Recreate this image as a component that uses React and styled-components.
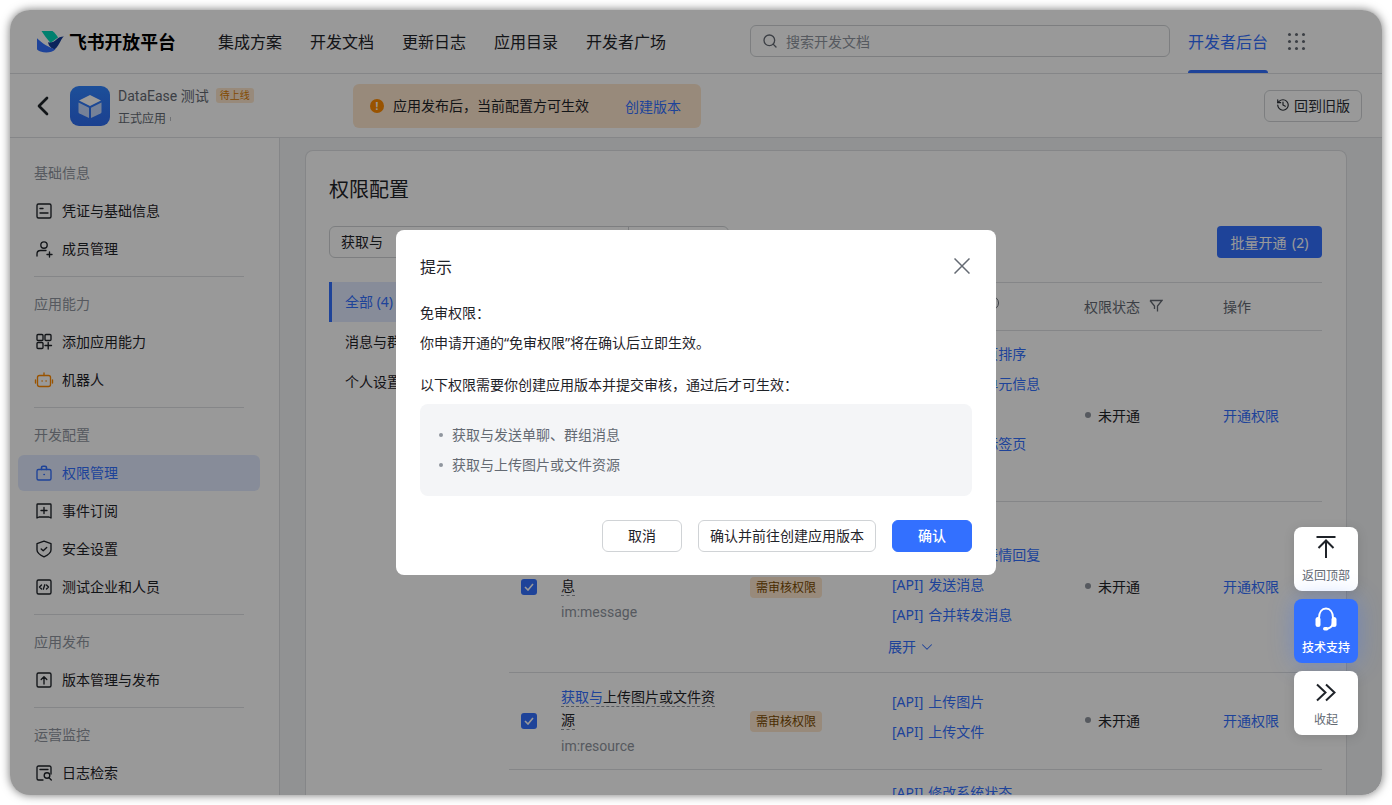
import React from "react";
import styled, { createGlobalStyle } from "styled-components";
import { ChevronLeft, ChevronDown, Search, History } from "lucide-react";

const Global = createGlobalStyle`
  html, body { margin: 0; padding: 0; background: #fff; }
  body { font-family: "Noto Sans", "Noto Sans CJK SC", sans-serif; font-size: 14px; color: #1f2329; }
  * { box-sizing: border-box; }
`;

const Page = styled.div`
  width: 1392px; height: 805px; padding: 10px; overflow: hidden; background: #fff;
`;
const Win = styled.div`
  position: relative; width: 1372px; height: 785px; border-radius: 20px; overflow: hidden;
  background: #fff; display: flex; flex-direction: column;
  box-shadow: 0 0 10px rgba(0,0,0,.55);
`;
const Overlay = styled.div`
  position: absolute; inset: 0; background: rgba(0,0,0,.4); z-index: 5;
`;

/* top bar */
const Top = styled.header`
  height: 64px; flex: none; display: flex; align-items: center; padding: 0 0 0 27px;
  border-bottom: 1px solid #dee0e3;
`;
const LogoBox = styled.div`display: flex; align-items: center; gap: 5px; width: 181px;`;
const LogoText = styled.span`font-size: 17.8px; font-weight: 700; color: #000; line-height: 24px;`;
const TopNav = styled.nav`display: flex; gap: 28px; width: 532px;`;
const TopLink = styled.a`font-size: 16px; line-height: 24px; color: #1f2329;`;
const SearchBox = styled.div`
  width: 420px; height: 32px; border: 1px solid #d0d3d6; border-radius: 6px; display: flex; align-items: center;
  padding-left: 11px; gap: 8px; font-size: 14px; color: #8f959e; margin-top: -2px;
`;
const DevTab = styled.a`
  position: relative; margin-left: 18px; font-size: 16px; line-height: 64px; height: 63px; color: #3370ff;
  &::after { content: ""; position: absolute; left: 0; right: 0; bottom: 0; height: 3px; background: #3370ff; border-radius: 3px 3px 0 0; }
`;
const Dots = styled.div`
  margin-left: 20px; display: grid; grid-template-columns: repeat(3, 3.4px); gap: 3.6px;
  i { width: 3.4px; height: 3.4px; border-radius: 50%; background: #646a73; display: block; }
`;

/* sub bar */
const Sub = styled.div`
  height: 64px; flex: none; display: flex; align-items: center; padding-left: 22px; border-bottom: 1px solid #dee0e3;
`;
const Back = styled.div`
  width: 38px; display: flex; color: #1f2329;
  svg { flex: none; margin-left: -5px; }
`;
const AppIcon = styled.div`
  width: 40px; height: 40px; border-radius: 9px; background: linear-gradient(180deg,#2f83ff,#2e6cf0);
  display: flex; align-items: center; justify-content: center; margin-right: 8px;
`;
const AppInfo = styled.div`width: 235px; display: flex; flex-direction: column; gap: 3px;`;
const AppNameRow = styled.div`display: flex; align-items: center; gap: 7px; line-height: 22px; color: #646a73; padding-top: 1px;`;
const AppName = styled.span`font-family: Roboto, "Noto Sans CJK SC", sans-serif;`;
const WaitTag = styled.span`
  font-size: 10px; line-height: 15px; padding: 0 4px; border-radius: 3px; background: #fee7cd; color: #d97a00;
`;
const AppSub = styled.div`
  font-size: 12px; line-height: 18px; color: #646a73; display: flex; align-items: center; gap: 4px;
  &::after { content: ""; width: 1px; height: 4px; background: #bbbfc4; }
`;
const Alert = styled.div`
  width: 348px; height: 44px; border-radius: 6px; background: #fee7cd; display: flex; align-items: center; padding-left: 17px;
`;
const AlertDot = styled.span`
  width: 14px; height: 14px; border-radius: 50%; background: #ff8a00; color: #fff; font-size: 10px; font-weight: 700;
  line-height: 14px; text-align: center; margin-right: 9px;
`;
const AlertText = styled.span`line-height: 22px; color: #1f2329;`;
const AlertLink = styled.a`margin-left: 36px; color: #3370ff;`;
const OldBtn = styled.button`
  margin-left: 563px; width: 98px; height: 32px; border: 1px solid #d0d3d6; border-radius: 6px; background: #fff;
  font: inherit; display: flex; align-items: center; justify-content: center; gap: 4px; padding: 0 0 1px; color: #2b2f36;
`;

/* body */
const Body = styled.div`flex: 1; min-height: 0; display: flex;`;
const Side = styled.aside`
  width: 270px; flex: none; border-right: 1px solid #dee0e3; padding-top: 24px; overflow: hidden;
`;
const SideLabel = styled.div`
  font-size: 14px; line-height: 22px; color: #8f959e; margin: 0 0 9px 24px;
`;
const SideItem = styled.a`
  display: flex; align-items: center; gap: 8px; height: 36px; margin: 0 19px 2px 8px; padding: 0 0 2px 16px;
  border-radius: 6px; color: ${p => (p.$active ? "#3370ff" : "#1f2329")};
  background: ${p => (p.$active ? "rgba(51,112,255,.15)" : "transparent")};
`;
const SideIcon = styled.svg`
  width: 20px; height: 20px; flex: none; margin-top: 2px; fill: none; stroke: ${p => p.$c || "currentColor"}; stroke-width: 1.35;
  stroke-linejoin: round; stroke-linecap: round;
`;
const SideRule = styled.div`height: 1px; background: #dee0e3; margin: 9px 35px 16px 24px;`;

const Main = styled.main`
  flex: 1; min-width: 0; overflow: hidden; background: #f2f3f5; padding: 12px 35px 0 25px;
`;
const Card = styled.section`
  background: #fff; border: 1px solid #dee0e3; border-bottom: 0; border-radius: 8px 8px 0 0; padding: 24px 24px 0 23px; height: 800px;
`;
const CardTitle = styled.h2`margin: 1px 0 22px; font-size: 20px; font-weight: 400; line-height: 28px; color: #1f2329;`;
const FilterRow = styled.div`display: flex; justify-content: space-between; height: 32px; margin-bottom: 24px;`;
const FilterBox = styled.div`
  width: 400px; border: 1px solid #d0d3d6; border-radius: 6px; display: flex; line-height: 30px;
`;
const FilterInput = styled.div`
  width: 299px; padding-left: 11px; border-right: 1px solid #d0d3d6; color: #1f2329;
`;
const PrimaryBtn = styled.button`
  width: 105px; height: 32px; border: 0; border-radius: 4px; background: #3370ff; color: #fff; font: inherit; padding: 0; word-spacing: 2px;
`;
const Columns = styled.div`display: flex;`;
const CatList = styled.div`width: 180px; flex: none;`;
const CatItem = styled.div`
  height: 40px; line-height: 40px; padding-left: ${p => (p.$active ? "13px" : "16px")};
  border-left: ${p => (p.$active ? "3px solid #3370ff" : "0")};
  background: ${p => (p.$active ? "rgba(51,112,255,.15)" : "transparent")};
  color: ${p => (p.$active ? "#3370ff" : "#1f2329")};
`;
const Table = styled.div`width: 813px; flex: none;`;
const grid = `display: grid; grid-template-columns: 52px 189px 142px 192px 139px 99px;`;
const HeadRow = styled.div`
  ${grid} height: 49px; align-items: center; padding-bottom: 2px; border-top: 1px solid #dee0e3; border-bottom: 1px solid #dee0e3; color: #646a73;
`;
const HeadCell = styled.div`display: flex; align-items: center; gap: 9px;`;
const HelpDot = styled.span`
  width: 14px; height: 14px; margin-left: auto; margin-right: 85px; margin-top: -6px; border: 1px solid #646a73; border-radius: 50%; flex: none;
`;
const Row = styled.div`${grid} align-items: center; padding: 8px 0; border-bottom: 1px solid #dee0e3;`;
const CheckCell = styled.div`padding-left: 12px; display: flex;`;
const Check = styled.span`
  width: 16px; height: 16px; border-radius: 3px; background: #3370ff; display: flex; align-items: center; justify-content: center;
`;
const NameCell = styled.div`width: 158px; padding: 4px 0 3px;`;
const NameLine = styled.div`line-height: 23px;`;
const NameText = styled.span`border-bottom: 1px dashed #8f959e; color: #1f2329;`;
const Hit = styled.span`color: #3370ff;`;
const ScopeId = styled.div`font-family: Roboto, sans-serif; line-height: 24px; margin-top: 3px; color: #8f959e;`;
const ReviewTag = styled.span`
  display: inline-block; width: 72px; height: 21px; border-radius: 4px; background: #fee7cd; color: #7a4a00;
  font-size: 12px; line-height: 21px; text-align: center;
`;
const ApiList = styled.div`padding-bottom: ${p => (p.$open ? "2px" : "8px")};`;
const ApiLink = styled.div`line-height: 30px; color: #3370ff; word-spacing: 1.2px;`;
const Expand = styled.div`
  margin: 2px 0 0 -4px; line-height: 30px; color: #3370ff; display: flex; align-items: center; gap: 2px;
`;
const Status = styled.div`display: flex; align-items: center; gap: 7px; color: #1f2329; margin-top: -2px;`;
const Dot = styled.i`width: 6px; height: 6px; border-radius: 50%; background: #8f959e; margin-left: 1px; margin-top: -1px;`;
const OpLink = styled.a`color: #3370ff; margin-top: -2px;`;

/* floating */
const FloatCol = styled.div`
  position: absolute; right: 24px; top: 517px; z-index: 8; display: flex; flex-direction: column; gap: 8px;
`;
const FloatBtn = styled.div`
  width: 64px; height: 64px; border-radius: 8px; background: ${p => (p.$primary ? "#3370ff" : "#fff")};
  color: ${p => (p.$primary ? "#fff" : "#1f2329")}; display: flex; flex-direction: column; align-items: center;
  padding-top: 8px; box-shadow: ${p => (p.$primary ? "0 0 24px rgba(51,112,255,.35)" : "0 2px 12px rgba(0,0,0,.12)")};
`;
const FloatIcon = styled.svg`
  width: 24px; height: 24px; flex: none; fill: none; stroke: currentColor; stroke-width: 2;
`;
const FloatLabel = styled.span`font-size: 12px; line-height: 18px; margin-top: 8px; color: ${p => (p.$primary ? "#fff" : "#646a73")}; font-weight: ${p => (p.$primary ? 500 : 400)};`;

/* modal */
const ModalWrap = styled.div`
  position: fixed; inset: 0; z-index: 10; display: flex; align-items: center; justify-content: center;
`;
const Modal = styled.div`
  width: 600px; height: 345px; background: #fff; border-radius: 8px; padding: 24px; display: flex; flex-direction: column;
`;
const ModalHead = styled.div`display: flex; align-items: center; justify-content: space-between; height: 24px; margin-bottom: 24px;`;
const ModalTitle = styled.div`font-size: 16px; line-height: 24px; color: #1f2329; padding-top: 2px;`;
const CloseBtn = styled.svg`
  width: 16px; height: 16px; margin-right: 2px; fill: none; stroke: #646a73; stroke-width: 1.5;
`;
const Para = styled.p`margin: 0 0 8px; line-height: 22px; color: #1f2329;`;
const ParaGap = styled(Para)`margin: 12px 0 8px;`;
const ListBox = styled.ul`
  list-style: none; margin: 0; padding: 16px 19px; background: #f4f5f7; border-radius: 8px; height: 92px; flex: none;
`;
const ListItem = styled.li`
  line-height: 30px; color: #646a73; display: flex; align-items: center; gap: 9px;
  &::before { content: ""; width: 4px; height: 4px; border-radius: 50%; background: #8f959e; margin-top: -1px; }
`;
const ModalFoot = styled.div`display: flex; justify-content: flex-end; gap: 16px; margin-top: 24px;`;
const Btn = styled.button`
  height: 32px; min-width: 80px; padding: 0 11px; border-radius: 6px; font: inherit; line-height: 30px;
  border: 1px solid ${p => (p.$primary ? "#3370ff" : "#d0d3d6")};
  background: ${p => (p.$primary ? "#3370ff" : "#fff")};
  color: ${p => (p.$primary ? "#fff" : "#1f2329")};
  font-weight: ${p => (p.$primary ? 500 : 400)};
`;

const Logo = () => (
  <svg width="27" height="23" viewBox="0 0 27 23">
    <path d="M4.5 1h11c2.5 2 4.2 4.2 5.5 6.5L13.5 13C10 9 7 5 4.5 1z" fill="#00d6b9" />
    <path d="M11 12.2c3 .9 6-.2 8.5-2.6 2-1.900 4-3 7.500-3.100-1.500 1-2.400 2.600-3.500 4.700-1.300 2.500-3.200 6.300-6 8.300-3-1-6-3.700-6.500-7.300z" fill="#133c9a" />
    <path d="M0 8.200c5 5 11.500 9.300 18.500 11C15 22.500 9 23.500 3.500 21.500 1.500 20.700 0 20 0 19z" fill="#3370ff" />
  </svg>
);
const Cube = () => (
  <svg width="28" height="28" viewBox="0 0 28 28">
    <path d="M14 3l11 5.500L14 14 3 8.500z" fill="#fff" />
    <path d="M2.500 10.500l10.500 5.300V26L3.500 21.500c-.6-.3-1-.9-1-1.600z" fill="#fff" opacity=".72" />
    <path d="M25.500 10.500L15 15.800V26l9.500-4.500c.6-.3 1-.9 1-1.600z" fill="#fff" opacity=".72" />
  </svg>
);
const Chk = () => (
  <svg width="10" height="8" viewBox="0 0 10 8"><path d="M1 4l3 3 5-6" fill="none" stroke="#fff" strokeWidth="1.6" /></svg>
);

const icons = {
  card: <><rect x="3" y="3" width="14" height="14" rx="1.5" /><path d="M6 7.500h3M6 12h8" /></>,
  user: <><circle cx="10" cy="6" r="3.200" /><path d="M3 17v-2c0-2 1.500-3.500 3.500-3.500H12M13 15.500h5M15.500 13v5" /></>,
  apps: <><rect x="3" y="2.500" width="6" height="6" rx="1" /><rect x="11" y="2.500" width="6" height="6" rx="1" /><rect x="3" y="10.500" width="6" height="6" rx="1" /><path d="M11 13.500h6.500M14.200 10.500v6.500" /></>,
  bot: <><rect x="3.500" y="5.500" width="13" height="11" rx="2" /><path d="M10 3v2.500M1.500 10v3M18.500 10v3M8 11h.2M12 11h.2" /></>,
  lock: <><rect x="3" y="6.500" width="14" height="10.500" rx="1.500" /><path d="M7.500 6.500V4.800c0-.9.600-1.500 1.500-1.500h2c.9 0 1.500.6 1.500 1.500v1.700M10 11.500h.3" strokeWidth="1.6" /></>,
  event: <><path d="M3 3.800c0-.5.400-.8.800-.8h12.400c.4 0 .8.300.8.800V17l-2-1H5l-2 1z" /><path d="M7 9.500h6M10 6.500v6" /></>,
  shield: <><path d="M10 2.200l7 2.500v6.300c0 3-3.500 5.200-7 6.800-3.500-1.600-7-3.800-7-6.800V4.700z" /><path d="M7.200 10l2 1.800 3.500-3.300" /></>,
  code: <><rect x="3" y="3" width="14" height="14" rx="1.500" /><path d="M7.500 8L5.500 10l2 2M12.500 8l2 2-2 2M10.800 7.800l-1.500 4.400" /></>,
  up: <><rect x="3" y="3" width="14" height="14" rx="1.500" /><path d="M10 14V7M7.200 9.500L10 6.800l2.800 2.700" /></>,
  log: <><path d="M17 11V4.500c0-.8-.7-1.500-1.500-1.500h-11C3.700 3 3 3.700 3 4.500v11c0 .8.700 1.500 1.500 1.500H9M6 6.500h8" /><circle cx="13" cy="12.500" r="2.800" /><path d="M15 14.700l2.300 2.300" /></>,
};
const I = ({ n, c }) => <SideIcon viewBox="0 0 20 20" $c={c}>{icons[n]}</SideIcon>;

const sections = [
  ["基础信息", [["card", "凭证与基础信息"], ["user", "成员管理"]]],
  ["应用能力", [["apps", "添加应用能力"], ["bot", "机器人", "#ff8a00"]]],
  ["开发配置", [["lock", "权限管理", null, true], ["event", "事件订阅"], ["shield", "安全设置"], ["code", "测试企业和人员"]]],
  ["应用发布", [["up", "版本管理与发布"]]],
  ["运营监控", [["log", "日志检索"]]],
];

const rows = [
  { name: [["获取与", true], ["更新标签页信息", false]], id: "docs:tab", tag: "需审核权限",
    apis: ["[API] 更新标签页排序", "[API] 获取多维单元信息", "[API] 创建", "[API] 删除消息标签页"], open: true },
  { name: [["获取与", true], ["发送单聊、群组消", false]], tail: "息", id: "im:message", tag: "需审核权限",
    apis: ["[API] 回复消息", "[API] 添加消息表情回复", "[API] 发送消息", "[API] 合并转发消息"], open: true },
  { name: [["获取与", true], ["上传图片或文件资", false]], tail: "源", id: "im:resource", tag: "需审核权限",
    apis: ["[API] 上传图片", "[API] 上传文件"] },
  { name: [["获取与", true], ["修改系统状态", false]], id: "im:status", tag: "免审权限",
    apis: ["[API] 修改系统状态", "[API] 获取系统状态", "[API] 删除系统状态", "[API] 批量修改状态"], open: true },
];

export default function App() {
  return (
    <Page>
      <Global />
      <Win>
        <Top>
          <LogoBox><Logo /><LogoText>飞书开放平台</LogoText></LogoBox>
          <TopNav>
            {["集成方案", "开发文档", "更新日志", "应用目录", "开发者广场"].map(t => <TopLink key={t}>{t}</TopLink>)}
          </TopNav>
          <SearchBox><Search size={16} color="#646a73" />搜索开发文档</SearchBox>
          <DevTab>开发者后台</DevTab>
          <Dots>{Array.from({ length: 9 }).map((_, i) => <i key={i} />)}</Dots>
        </Top>
        <Sub>
          <Back><ChevronLeft size={32} strokeWidth={2} /></Back>
          <AppIcon><Cube /></AppIcon>
          <AppInfo>
            <AppNameRow><AppName>DataEase 测试</AppName><WaitTag>待上线</WaitTag></AppNameRow>
            <AppSub>正式应用</AppSub>
          </AppInfo>
          <Alert>
            <AlertDot>!</AlertDot>
            <AlertText>应用发布后，当前配置方可生效</AlertText>
            <AlertLink>创建版本</AlertLink>
          </Alert>
          <OldBtn><History size={14} />回到旧版</OldBtn>
        </Sub>
        <Body>
          <Side>
            {sections.map(([label, items], i) => (
              <React.Fragment key={label}>
                {i > 0 && <SideRule />}
                <SideLabel>{label}</SideLabel>
                {items.map(([ic, text, c, active]) => (
                  <SideItem key={text} $active={active}><I n={ic} c={c} />{text}</SideItem>
                ))}
              </React.Fragment>
            ))}
          </Side>
          <Main>
            <Card>
              <CardTitle>权限配置</CardTitle>
              <FilterRow>
                <FilterBox><FilterInput>获取与</FilterInput></FilterBox>
                <PrimaryBtn>批量开通 (2)</PrimaryBtn>
              </FilterRow>
              <Columns>
                <CatList>
                  <CatItem $active>全部 (4)</CatItem>
                  <CatItem>消息与群组 (3)</CatItem>
                  <CatItem>个人设置 (1)</CatItem>
                </CatList>
                <Table>
                  <HeadRow>
                    <span />
                    <HeadCell>权限名称</HeadCell>
                    <HeadCell>权限类型</HeadCell>
                    <HeadCell>相关 API 事件<HelpDot /></HeadCell>
                    <HeadCell>权限状态
                      <svg width="14" height="14" viewBox="0 0 14 14" fill="none" stroke="#646a73" strokeWidth="1.3"><path d="M1 1.500h12L8.500 7v5.500M5.500 10V7L1 1.500" /></svg>
                    </HeadCell>
                    <HeadCell>操作</HeadCell>
                  </HeadRow>
                  {rows.map(r => (
                    <Row key={r.id}>
                      <CheckCell><Check><Chk /></Check></CheckCell>
                      <NameCell>
                        <NameLine>
                          <NameText>{r.name.map(([t, h]) => (h ? <Hit key={t}>{t}</Hit> : t))}</NameText>
                        </NameLine>
                        {r.tail && <NameLine><NameText>{r.tail}</NameText></NameLine>}
                        <ScopeId>{r.id}</ScopeId>
                      </NameCell>
                      <div><ReviewTag>{r.tag}</ReviewTag></div>
                      <ApiList $open={r.open}>
                        {r.apis.map(a => <ApiLink key={a}>{a}</ApiLink>)}
                        {r.open && <Expand>展开 <ChevronDown size={18} strokeWidth={1.4} /></Expand>}
                      </ApiList>
                      <Status><Dot />未开通</Status>
                      <OpLink>开通权限</OpLink>
                    </Row>
                  ))}
                </Table>
              </Columns>
            </Card>
          </Main>
        </Body>
        <Overlay />
        <FloatCol>
          <FloatBtn>
            <FloatIcon viewBox="0 0 24 24"><path d="M2.500 2h19M12 23V5M4.500 13L12 5.500 19.500 13" /></FloatIcon>
            <FloatLabel>返回顶部</FloatLabel>
          </FloatBtn>
          <FloatBtn $primary>
            <FloatIcon viewBox="0 0 24 24">
              <path d="M5 11c0-6 3-9.500 7-9.500s7 3.500 7 9.500v4c0 3-2 5.500-5 6.500" />
              <rect x="1.500" y="10" width="5" height="10" rx="2.500" fill="#fff" stroke="none" />
              <rect x="17.500" y="10" width="5" height="10" rx="2.500" fill="#fff" stroke="none" />
              <rect x="9" y="20" width="5.500" height="3.500" rx="1.700" fill="#fff" stroke="none" />
            </FloatIcon>
            <FloatLabel $primary>技术支持</FloatLabel>
          </FloatBtn>
          <FloatBtn>
            <FloatIcon viewBox="0 0 24 24"><path d="M3 5.500l8.500 8L3 21.500M12 5.500l8.500 8-8.500 8" /></FloatIcon>
            <FloatLabel>收起</FloatLabel>
          </FloatBtn>
        </FloatCol>
      </Win>
      <ModalWrap>
        <Modal>
          <ModalHead>
            <ModalTitle>提示</ModalTitle>
            <CloseBtn viewBox="0 0 16 16"><path d="M.5.500l15 15M15.500.500l-15 15" /></CloseBtn>
          </ModalHead>
          <Para>免审权限：</Para>
          <Para>你申请开通的“免审权限”将在确认后立即生效。</Para>
          <ParaGap>以下权限需要你创建应用版本并提交审核，通过后才可生效：</ParaGap>
          <ListBox>
            <ListItem>获取与发送单聊、群组消息</ListItem>
            <ListItem>获取与上传图片或文件资源</ListItem>
          </ListBox>
          <ModalFoot>
            <Btn>取消</Btn>
            <Btn>确认并前往创建应用版本</Btn>
            <Btn $primary>确认</Btn>
          </ModalFoot>
        </Modal>
      </ModalWrap>
    </Page>
  );
}
